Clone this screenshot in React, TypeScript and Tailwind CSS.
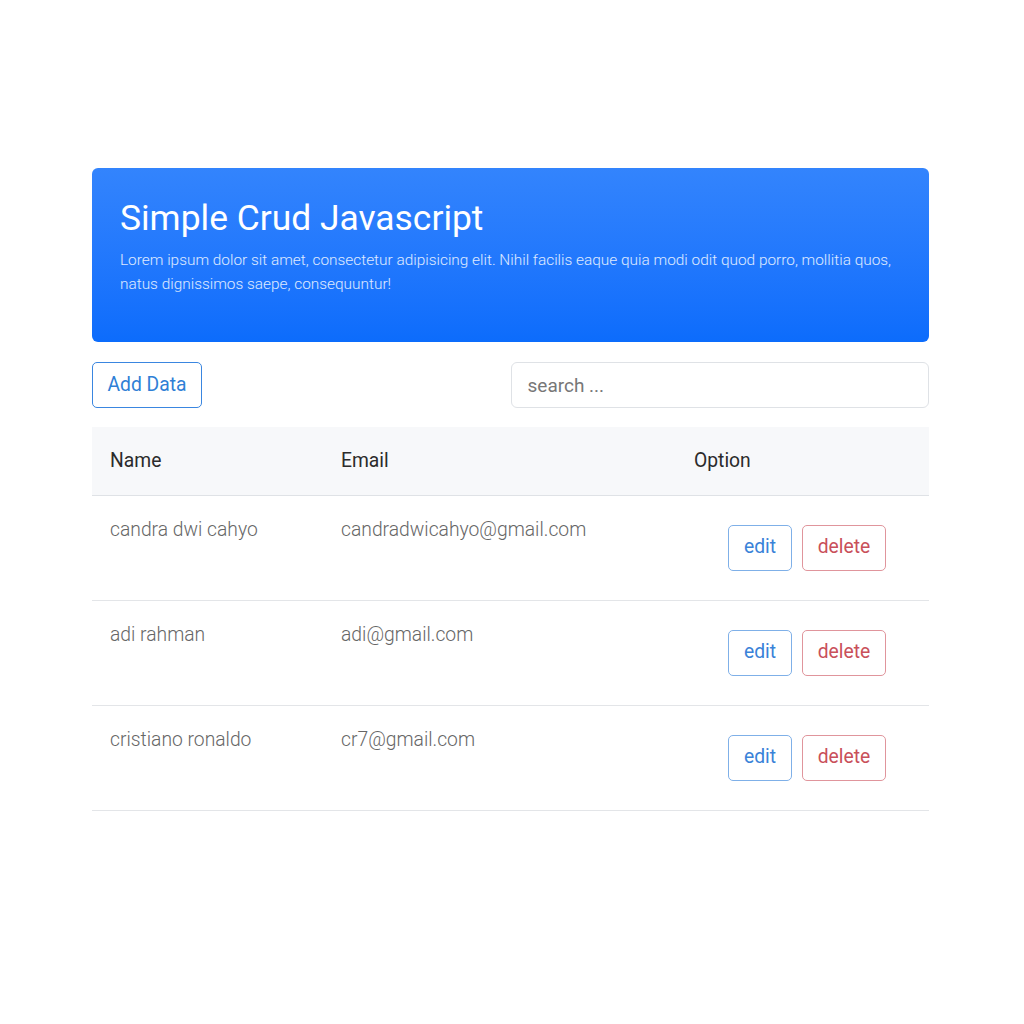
import React from "react"

const rows = [
  { name: "candra dwi cahyo", email: "candradwicahyo@gmail.com" },
  { name: "adi rahman", email: "adi@gmail.com" },
  { name: "cristiano ronaldo", email: "cr7@gmail.com" },
]

export default function App() {
  return (
    <div className="min-h-[1024px] bg-white font-['Roboto',sans-serif]">
      <div className="ml-[92px] w-[837px] pt-[168px]">
        {/* Jumbotron */}
        <div className="h-[174px] rounded-[6px] bg-gradient-to-b from-[#3384fd] to-[#0c6cfc] px-[28px] pt-[28px]">
          <h1 className="text-[35.4px] leading-[44px] font-normal text-white">Simple Crud Javascript</h1>
          <p className="mt-[8px] text-[15.4px] leading-[24px] font-light text-white/85">
            Lorem ipsum dolor sit amet, consectetur adipisicing elit. Nihil facilis eaque quia modi odit quod porro, mollitia quos,
            <br />
            natus dignissimos saepe, consequuntur!
          </p>
        </div>

        {/* Toolbar */}
        <div className="mt-[20px] grid grid-cols-2">
          <div>
            <button className="h-[46px] w-[110px] rounded-[5px] border border-[#3a86e0] text-[19.3px] text-[#2f7fd6]">
              Add Data
            </button>
          </div>
          <input
            type="text"
            placeholder="search ..."
            className="h-[46px] w-full rounded-[6px] border border-[#dfe2e6] px-[16px] text-[19px] text-[#333] placeholder:text-[#777] outline-none"
          />
        </div>

        {/* Table */}
        <table className="mt-[19px] w-full border-collapse text-left">
          <thead>
            <tr className="h-[68px] border-b border-[#dfe2e6] bg-[#f7f8fa]">
              <th className="w-[231px] pl-[18px] pt-[2px] text-[19.3px] font-normal text-[#2b2b2b]">Name</th>
              <th className="w-[353px] pl-[18px] pt-[2px] text-[19.3px] font-normal text-[#2b2b2b]">Email</th>
              <th className="pl-[18px] pt-[2px] text-[19.3px] font-normal text-[#2b2b2b]">Option</th>
            </tr>
          </thead>
          <tbody>
            {rows.map((r) => (
              <tr key={r.email} className="h-[105px] border-b border-[#e3e5e8]">
                <td className="pl-[18px] pt-[20px] align-top text-[19.3px] leading-[27px] font-light text-[#666]">{r.name}</td>
                <td className="pl-[18px] pt-[20px] align-top text-[19.3px] leading-[27px] font-light text-[#666]">{r.email}</td>
                <td className="pl-[52px] align-middle">
                  <div className="flex gap-[10px]">
                    <button className="h-[46px] w-[64px] rounded-[5px] border border-[#7fb0e8] text-[19.3px] text-[#3a82d8]">
                      edit
                    </button>
                    <button className="h-[46px] w-[84px] rounded-[5px] border border-[#e0959c] text-[19.3px] text-[#c9505a]">
                      delete
                    </button>
                  </div>
                </td>
              </tr>
            ))}
          </tbody>
        </table>
      </div>
    </div>
  )
}
